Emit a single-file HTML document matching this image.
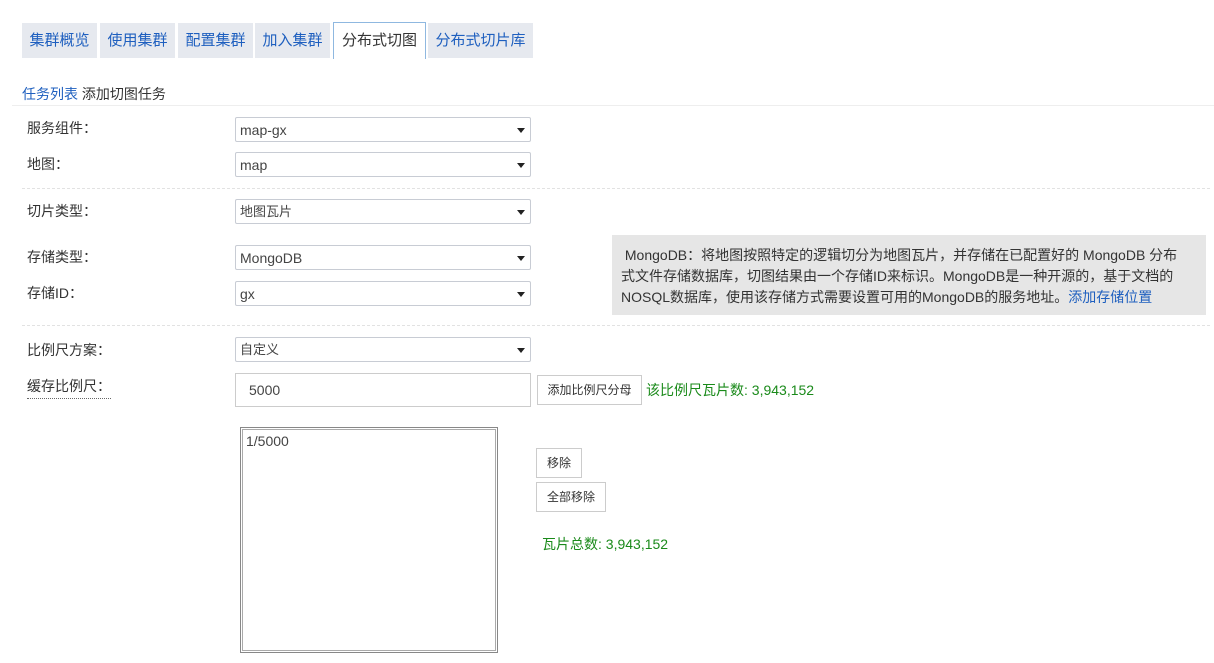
<!DOCTYPE html>
<html><head><meta charset="utf-8"><style>
body{margin:0;width:1214px;height:663px;background:#fff;font-family:"Liberation Sans","Noto Sans CJK SC",sans-serif;color:#333;position:relative;overflow:hidden}
.a{position:absolute}
.tab{position:absolute;top:23px;height:35px;background:#e6e9ef;color:#1e5fbf;font-size:15px;line-height:35px;text-align:center}
.tab.on{background:#fff;border:1px solid #8fb8e0;border-bottom:none;color:#333;height:36px;top:22px}
.lbl{position:absolute;left:27px;font-size:14px;color:#333}
.sel{position:absolute;left:235px;width:296px;height:25px;border:1px solid #c8ccd4;border-radius:2px;font-size:14px;line-height:24px;box-sizing:border-box;padding-left:4px;color:#444}
.sel:after{content:"";position:absolute;right:5px;top:10px;border-left:4px solid transparent;border-right:4px solid transparent;border-top:5px solid #222}
.dash{position:absolute;left:22px;width:1188px;border-top:1px dashed #e2e2e2}
.btn{position:absolute;border:1px solid #ccc;background:#fff;font-size:12px;text-align:center;box-sizing:border-box;color:#333}
.g{position:absolute;color:#1a8a1a;font-size:14px}
</style></head><body>
<div class="tab" style="left:22px;width:75px">集群概览</div>
<div class="tab" style="left:100px;width:75px">使用集群</div>
<div class="tab" style="left:178px;width:75px">配置集群</div>
<div class="tab" style="left:255px;width:75px">加入集群</div>
<div class="tab on" style="left:333px;width:91px">分布式切图</div>
<div class="tab" style="left:428px;width:105px">分布式切片库</div>

<div class="a" style="left:22px;top:84px;font-size:14px"><span style="color:#1e5fbf">任务列表</span> 添加切图任务</div>
<div class="a" style="left:12px;top:105px;width:1202px;border-top:1px solid #eee"></div>

<div class="lbl" style="top:118px">服务组件：</div><div class="sel" style="top:117px">map-gx</div>
<div class="lbl" style="top:154px">地图：</div><div class="sel" style="top:152px">map</div>
<div class="dash" style="top:188px"></div>
<div class="lbl" style="top:201px">切片类型：</div><div class="sel" style="top:199px;font-size:13px">地图瓦片</div>
<div class="lbl" style="top:247px">存储类型：</div><div class="sel" style="top:245px">MongoDB</div>
<div class="lbl" style="top:283px">存储ID：</div><div class="sel" style="top:281px">gx</div>
<div class="a" style="left:612px;top:235px;width:594px;height:80px;background:#e6e6e6;font-size:14px;line-height:21px;padding:10px 0 0 9px;box-sizing:border-box;color:#333;white-space:nowrap">&nbsp;MongoDB：将地图按照特定的逻辑切分为地图瓦片，并存储在已配置好的 MongoDB 分布<br>式文件存储数据库，切图结果由一个存储ID来标识。MongoDB是一种开源的，基于文档的<br>NOSQL数据库，使用该存储方式需要设置可用的MongoDB的服务地址。<span style="color:#1e5fbf">添加存储位置</span></div>
<div class="dash" style="top:325px"></div>
<div class="lbl" style="top:340px">比例尺方案：</div><div class="sel" style="top:337px;font-size:13px">自定义</div>
<div class="lbl" style="top:376px;border-bottom:1px dotted #666;padding-bottom:2px">缓存比例尺：</div>
<div class="a" style="left:235px;top:373px;width:296px;height:34px;border:1px solid #ccc;box-sizing:border-box;font-size:14px;line-height:32px;padding-left:13px;color:#444">5000</div>
<div class="btn" style="left:537px;top:375px;width:105px;height:30px;line-height:28px">添加比例尺分母</div>
<div class="g" style="left:646px;top:380px">该比例尺瓦片数: 3,943,152</div>
<div class="a" style="left:240px;top:427px;width:258px;height:226px;border:1px solid #888;box-sizing:border-box;padding:1px"><div style="border:1px solid #aaa;height:100%;box-sizing:border-box;font-size:14px;padding:3px 3px;color:#444">1/5000</div></div>
<div class="btn" style="left:536px;top:448px;width:46px;height:30px;line-height:28px">移除</div>
<div class="btn" style="left:536px;top:482px;width:70px;height:30px;line-height:28px">全部移除</div>
<div class="g" style="left:542px;top:534px">瓦片总数: 3,943,152</div>
</body></html>
